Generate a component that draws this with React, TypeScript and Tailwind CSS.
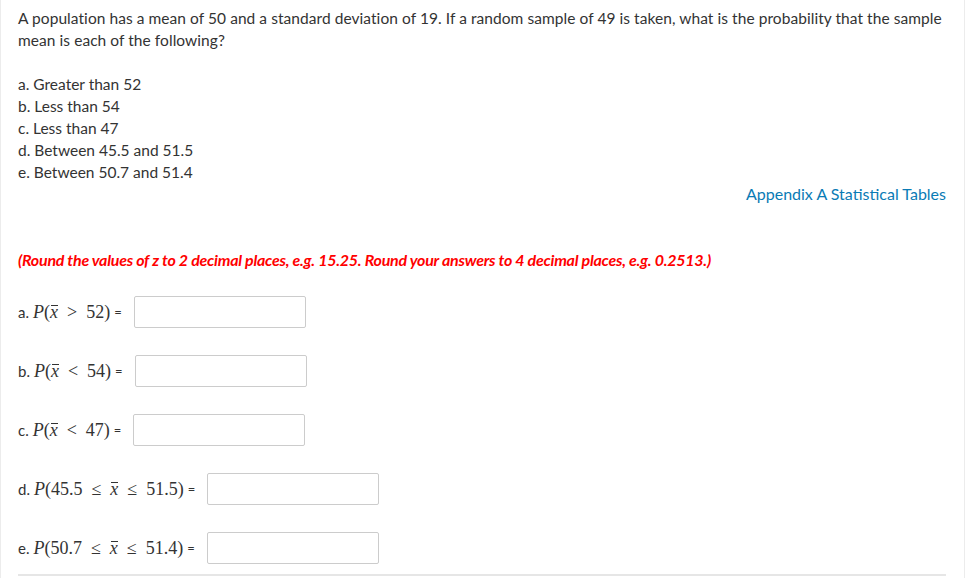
const ITEMS = [
  "a. Greater than 52",
  "b. Less than 54",
  "c. Less than 47",
  "d. Between 45.5 and 51.5",
  "e. Between 50.7 and 51.4",
];

function Xbar() {
  return (
    <span className="relative italic">
      x
      <span className="absolute left-[1px] right-0 top-[3px] h-px bg-current" />
    </span>
  );
}

function Op({ c }: { c: string }) {
  return <span className="mx-[9px]">{c}</span>;
}

const ROWS = [
  { label: "a.", body: <><Xbar /><Op c=">" />52</> },
  { label: "b.", body: <><Xbar /><Op c="<" />54</> },
  { label: "c.", body: <><Xbar /><Op c="<" />47</> },
  { label: "d.", body: <>45.5<Op c="≤" /><Xbar /><Op c="≤" />51.5</> },
  { label: "e.", body: <>50.7<Op c="≤" /><Xbar /><Op c="≤" />51.4</> },
];

export default function App() {
  return (
    <div className="w-[965px] h-[578px] bg-white overflow-hidden border-l border-r border-[#ececec] font-['Lato','Open_Sans',sans-serif] text-[15.5px] leading-[22px] text-[#333]">
      <div className="px-[17px] pt-[7px]">
        <p className="tracking-[0.06px]">
          A population has a mean of 50 and a standard deviation of 19. If a random sample of 49 is taken, what is
          the probability that the sample mean is each of the following?
        </p>

        <div className="mt-[22px]">
          {ITEMS.map((t) => (
            <div key={t}>{t}</div>
          ))}
        </div>

        <div className="text-right pr-[1px]">
          <span className="text-[#0a7bb5] text-[16px]">Appendix A Statistical Tables</span>
        </div>

        <p className="mt-[44px] text-[#f00] text-[16px] font-bold italic tracking-[-0.25px]">
          (Round the values of z to 2 decimal places, e.g. 15.25. Round your answers to 4 decimal places, e.g. 0.2513.)
        </p>

        <div className="mt-[25px] flex flex-col gap-[27px]">
          {ROWS.map((r) => (
            <div key={r.label} className="flex items-center h-[32px]">
              <span className="text-[15px]">{r.label}</span>
              <span className="ml-[4px] font-['Liberation_Serif',serif] text-[18px]">
                <span className="italic">P</span>(
                {r.body})
              </span>
              <span className="ml-[4px] text-[13px]">=</span>
              <div className="ml-[12px] w-[172px] h-[32px] border border-[#ccc] rounded-[2px] bg-white" />
            </div>
          ))}
        </div>

        <div className="mt-[10px] mr-[1px] border-t-2 border-[#e6e6e6]" />
      </div>
    </div>
  );
}
